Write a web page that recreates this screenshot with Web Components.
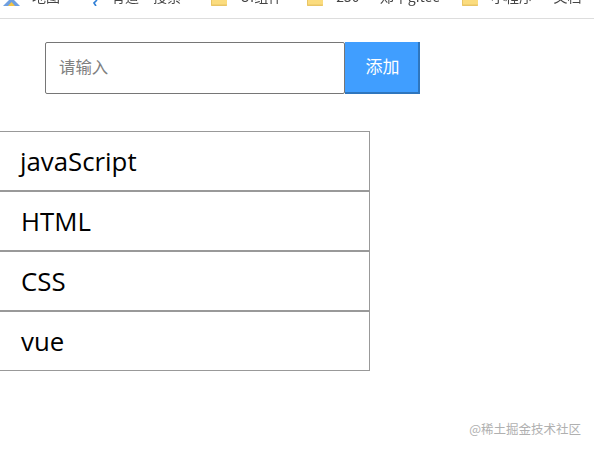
<!DOCTYPE html>
<html lang="zh">
<head>
<meta charset="utf-8">
<title>todo</title>
<style>
  html, body { margin: 0; height: 100%; background: #fff; overflow: hidden; }
  body { position: relative; font-family: "Open Sans", "Noto Sans CJK SC", sans-serif; }
</style>
</head>
<body>
<bookmark-bar>
  <bookmark-item icon="map" offset="3" gap="12">地图</bookmark-item>
  <bookmark-item icon="arrow" offset="33" gap="13">有道一搜索</bookmark-item>
  <bookmark-item icon="folder" offset="30" gap="13">UI组件</bookmark-item>
  <bookmark-item icon="folder" offset="25" gap="13">250 · 郑牛gitee</bookmark-item>
  <bookmark-item icon="folder" offset="22" gap="13">小程序 · 文档</bookmark-item>
</bookmark-bar>
<todo-form placeholder="请输入" label="添加"></todo-form>
<todo-list>
  <todo-item indent="21">javaScript</todo-item>
  <todo-item indent="22">HTML</todo-item>
  <todo-item indent="22">CSS</todo-item>
  <todo-item indent="22">vue</todo-item>
</todo-list>
<site-mark>@稀土掘金技术社区</site-mark>

<script>
const ICONS = {
  map: '<svg width="17" height="6" viewBox="0 0 17 6"><path d="M0 6 L6 0 H11 L17 6Z" fill="#6f9fe0"/><path d="M5 6 L8.5 2 L12 6Z" fill="#f3c544"/></svg>',
  arrow: '<svg width="5" height="6" viewBox="0 0 5 6"><path d="M4 0 L1 3 L3 6" fill="none" stroke="#2f7fd6" stroke-width="1.6"/></svg>',
  folder: '<svg width="16" height="6" viewBox="0 0 16 6"><path d="M0 0 H16 V5 Q16 6 15 6 H1 Q0 6 0 5Z" fill="#fbdc7e"/><path d="M0 0 V5 Q0 6 1 6 H15 Q16 6 16 5 V4.6 H1 V0Z" fill="#e9c566"/></svg>'
};

customElements.define("bookmark-bar", class extends HTMLElement {
  constructor() {
    super();
    this.attachShadow({mode: "open"}).innerHTML = `
      <style>
        :host { display: flex; height: 18px; border-bottom: 1px solid #ddd; overflow: hidden; }
        ::slotted(*) { flex: none; }
      </style>
      <slot></slot>`;
  }
});

customElements.define("bookmark-item", class extends HTMLElement {
  connectedCallback() {
    const offset = this.getAttribute("offset") || 0;
    const gap = this.getAttribute("gap") || 12;
    const icon = ICONS[this.getAttribute("icon")] || "";
    this.attachShadow({mode: "open"}).innerHTML = `
      <style>
        :host { display: flex; gap: ${gap}px; height: 18px; margin-left: ${offset}px; color: #444;
                font: 14px/18px "Noto Sans CJK SC", sans-serif; white-space: nowrap; }
        .in { margin-top: -13px; filter: blur(.3px); }
        svg { display: block; }
      </style>
      <span class="ic">${icon}</span><span class="in"><slot></slot></span>`;
  }
});

customElements.define("todo-form", class extends HTMLElement {
  connectedCallback() {
    this.attachShadow({mode: "open"}).innerHTML = `
      <style>
        :host { display: flex; padding: 23px 0 37px 45px; }
        input { box-sizing: border-box; width: 300px; height: 52px; margin: 0; padding: 0 13px 4px;
                border: 1px solid #767676; border-radius: 2px; outline: 0; background: #fff;
                font: 16.4px "Noto Sans CJK SC", sans-serif; }
        input::placeholder { color: #808080; opacity: 1; }
        button { box-sizing: border-box; width: 75px; height: 52px; margin: 0; padding: 0 0 3px 2px;
                 border: 0; border-right: 2px solid #2f76bd; border-bottom: 2px solid #2f76bd;
                 background: #409eff; color: #fff; font: 17px "Noto Sans CJK SC", sans-serif; }
      </style>
      <input placeholder="${this.getAttribute("placeholder")}"><button>${this.getAttribute("label")}</button>`;
  }
});

customElements.define("todo-list", class extends HTMLElement {
  constructor() {
    super();
    this.attachShadow({mode: "open"}).innerHTML = `
      <style>
        :host { display: block; box-sizing: border-box; width: 371px; margin-left: -1px;
                border-right: 1px solid #999; }
      </style>
      <slot></slot>`;
  }
});

customElements.define("todo-item", class extends HTMLElement {
  connectedCallback() {
    const indent = this.getAttribute("indent") || 20;
    this.attachShadow({mode: "open"}).innerHTML = `
      <style>
        :host { display: flex; align-items: center; box-sizing: border-box; height: 60px;
                border: solid #999; border-width: 1px 0; padding: 0 0 1px ${indent}px;
                color: #000; font: 25.8px "Open Sans", sans-serif; }
      </style>
      <slot></slot>`;
  }
});

customElements.define("site-mark", class extends HTMLElement {
  constructor() {
    super();
    this.attachShadow({mode: "open"}).innerHTML = `
      <style>
        :host { position: absolute; right: 13px; top: 421px; color: #b0b0b0;
                font: 12.5px/16px "Noto Sans CJK SC", sans-serif; white-space: nowrap; }
      </style>
      <slot></slot>`;
  }
});
</script>
</body>
</html>
